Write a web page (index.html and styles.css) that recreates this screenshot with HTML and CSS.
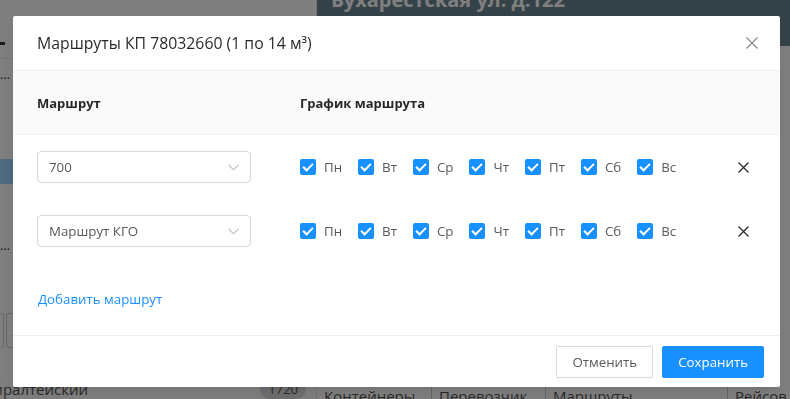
FILE: index.html
```html
<!DOCTYPE html>
<html lang="ru">
<head>
    <meta charset="UTF-8">
    <meta name="viewport" content="width=device-width, initial-scale=1.0">
    <title>Маршруты КП</title>
    <link rel="stylesheet" href="styles.css">
</head>
<body>
    <div class="page">
        <div class="sidebar">
            <div class="filter"><span class="dash"></span></div>
            <div class="list-item"><span class="dots">…</span></div>
            <div class="list-item tall"></div>
            <div class="list-item active"></div>
            <div class="list-item"><span class="dots">…</span></div>
            <div class="tools">
                <span class="tool-btn"></span>
                <span class="tool-btn"></span>
            </div>
            <div class="district">
                <span class="district-name">Адмиралтейский</span>
                <span class="badge">1720</span>
            </div>
        </div>
        <div class="main">
            <div class="topbar"><span class="address">Бухарестская ул. д.122</span></div>
            <div class="main-body"></div>
            <div class="grid-head">
                <span class="gh-cell">Контейнеры</span>
                <span class="gh-cell">Перевозчик</span>
                <span class="gh-cell">Маршруты</span>
                <span class="gh-cell last">Рейсов в неделю</span>
            </div>
        </div>
    </div>

    <div class="mask"></div>

    <div class="modal-wrap">
        <div class="modal">
            <div class="modal-header">
                <div class="modal-title">Маршруты КП 78032660 (1 по 14 м³)</div>
                <button class="modal-close" aria-label="Закрыть">
                    <svg width="12" height="12" viewBox="0 0 12 12"><path d="M0.5 0.5 L11.5 11.5 M11.5 0.5 L0.5 11.5" stroke="currentColor" stroke-width="1.2" fill="none"/></svg>
                </button>
            </div>

            <div class="routes">
                <div class="routes-row routes-head">
                    <div class="col-route">Маршрут</div>
                    <div class="col-days">График маршрута</div>
                    <div class="col-del"></div>
                </div>

                <div class="routes-row">
                    <div class="col-route">
                        <div class="select">
                            <span class="select-value">700</span>
                            <svg class="select-arrow" width="11" height="7" viewBox="0 0 11 7"><path d="M0.5 0.8 L5.5 5.8 L10.5 0.8" stroke="currentColor" stroke-width="1.1" fill="none"/></svg>
                        </div>
                    </div>
                    <div class="col-days days">
                        <label class="day"><span class="box"></span><span class="day-label">Пн</span></label>
                        <label class="day"><span class="box"></span><span class="day-label">Вт</span></label>
                        <label class="day"><span class="box"></span><span class="day-label">Ср</span></label>
                        <label class="day"><span class="box"></span><span class="day-label">Чт</span></label>
                        <label class="day"><span class="box"></span><span class="day-label">Пт</span></label>
                        <label class="day"><span class="box"></span><span class="day-label">Сб</span></label>
                        <label class="day"><span class="box"></span><span class="day-label">Вс</span></label>
                    </div>
                    <div class="col-del">
                        <svg width="11" height="11" viewBox="0 0 11 11"><path d="M0.5 0.5 L10.5 10.5 M10.5 0.5 L0.5 10.5" stroke="currentColor" stroke-width="1.2" fill="none"/></svg>
                    </div>
                </div>

                <div class="routes-row">
                    <div class="col-route">
                        <div class="select">
                            <span class="select-value">Маршрут КГО</span>
                            <svg class="select-arrow" width="11" height="7" viewBox="0 0 11 7"><path d="M0.5 0.8 L5.5 5.8 L10.5 0.8" stroke="currentColor" stroke-width="1.1" fill="none"/></svg>
                        </div>
                    </div>
                    <div class="col-days days">
                        <label class="day"><span class="box"></span><span class="day-label">Пн</span></label>
                        <label class="day"><span class="box"></span><span class="day-label">Вт</span></label>
                        <label class="day"><span class="box"></span><span class="day-label">Ср</span></label>
                        <label class="day"><span class="box"></span><span class="day-label">Чт</span></label>
                        <label class="day"><span class="box"></span><span class="day-label">Пт</span></label>
                        <label class="day"><span class="box"></span><span class="day-label">Сб</span></label>
                        <label class="day"><span class="box"></span><span class="day-label">Вс</span></label>
                    </div>
                    <div class="col-del">
                        <svg width="11" height="11" viewBox="0 0 11 11"><path d="M0.5 0.5 L10.5 10.5 M10.5 0.5 L0.5 10.5" stroke="currentColor" stroke-width="1.2" fill="none"/></svg>
                    </div>
                </div>
            </div>

            <div class="add-route">
                <a class="add-link" href="#">Добавить маршрут</a>
            </div>

            <div class="modal-footer">
                <button class="btn">Отменить</button>
                <button class="btn btn-primary">Сохранить</button>
            </div>
        </div>
    </div>
</body>
</html>
```

FILE: styles.css
```css
:root {
    --primary: #1890ff;
    --text: rgba(0, 0, 0, 0.85);
    --text-mid: #595959;
    --border: #d9d9d9;
    --split: #f0f0f0;
    --head-bg: #fafafa;
}

* {
    box-sizing: border-box;
    margin: 0;
    padding: 0;
}

body {
    font-family: 'Open Sans', 'Noto Sans', sans-serif;
    font-size: 13.3px;
    color: var(--text);
    background: #fff;
    width: 790px;
    height: 399px;
    overflow: hidden;
}

/* page behind the dialog */
.page {
    display: flex;
    height: 399px;
    overflow: hidden;
}

.sidebar {
    width: 316px;
    flex-shrink: 0;
    display: flex;
    flex-direction: column;
}

.filter {
    height: 60px;
    border-bottom: 1px solid #e8e8e8;
    padding-top: 42px;
}

.dash {
    display: block;
    width: 5px;
    height: 3px;
    background: #333;
}

.list-item {
    height: 34px;
    padding-top: 6px;
}

.list-item.tall {
    height: 70px;
}

.list-item.active {
    height: 26px;
    background: #9ed6ff;
    margin-bottom: 46px;
}

.dots {
    font-size: 13px;
    color: #333;
    line-height: 14px;
}

.tools {
    display: flex;
    gap: 2px;
    margin-top: 50px;
    height: 35px;
}

.tool-btn {
    width: 10px;
    height: 35px;
    border: 1px solid #ccc;
    border-radius: 3px;
    background: #fff;
}

.tool-btn:first-child {
    width: 4px;
    border-left: none;
}

.district {
    display: flex;
    align-items: flex-start;
    margin-top: 31px;
    padding-right: 10px;
}

.district-name {
    width: 88px;
    display: flex;
    justify-content: flex-end;
    overflow: hidden;
    white-space: nowrap;
    font-size: 15px;
    color: #555;
    line-height: 20px;
}

.badge {
    margin-left: auto;
    background: #ddd;
    border-radius: 10px;
    padding: 0 8px;
    font-size: 13px;
    color: #555;
    line-height: 20px;
}

.main {
    flex: 1;
    min-width: 0;
    display: flex;
    flex-direction: column;
    border-left: 1px solid #e8e8e8;
    overflow: hidden;
}

.topbar {
    height: 46px;
    flex-shrink: 0;
    background: #6a8692;
    overflow: hidden;
    padding-left: 14px;
}

.address {
    display: block;
    margin-top: -12px;
    color: #fff;
    font-weight: 700;
    font-size: 20px;
    line-height: 24px;
    white-space: nowrap;
}

.main-body {
    flex: 1;
}

.grid-head {
    display: flex;
    height: 13px;
    font-size: 15px;
    line-height: 20px;
    color: #555;
    white-space: nowrap;
    overflow: hidden;
}

.gh-cell {
    flex-shrink: 0;
    padding-left: 7px;
    border-right: 1px solid #ccc;
}

.gh-cell:nth-child(1) { width: 115px; }
.gh-cell:nth-child(2) { width: 114px; }
.gh-cell:nth-child(3) { width: 182px; }

.gh-cell.last {
    flex-shrink: 1;
    min-width: 0;
    overflow: hidden;
    border-right: none;
}

.mask {
    position: fixed;
    inset: 0;
    background: rgba(0, 0, 0, 0.5);
}

/* dialog */
.modal-wrap {
    position: fixed;
    inset: 0;
    padding: 16px 0 0 13px;
}

.modal {
    width: 767px;
    background: #fff;
    border-radius: 2px;
    box-shadow: 0 3px 6px -4px rgba(0, 0, 0, 0.12), 0 6px 16px rgba(0, 0, 0, 0.08);
}

.modal-header {
    display: flex;
    align-items: center;
    height: 55px;
    padding: 0 24px;
    border-bottom: 1px solid var(--split);
}

.modal-title {
    flex: 1;
    font-size: 15.8px;
    line-height: 22px;
    color: var(--text);
}

.modal-close {
    border: none;
    background: none;
    color: #8c8c8c;
    width: 12px;
    height: 12px;
    margin-right: -2px;
    display: flex;
}

.routes-row {
    display: flex;
    align-items: center;
    height: 64px;
}

.routes-head {
    background: var(--head-bg);
    border-bottom: 1px solid var(--split);
    font-weight: 700;
    font-size: 13px;
    color: rgba(0, 0, 0, 0.85);
}

.col-route {
    width: 287px;
    padding-left: 24px;
}

.col-days {
    flex: 1;
}

.col-del {
    width: 60px;
    padding-right: 31px;
    display: flex;
    justify-content: flex-end;
    color: #262626;
}

.select {
    width: 214px;
    height: 32px;
    border: 1px solid var(--border);
    border-radius: 4px;
    display: flex;
    align-items: center;
    padding: 0 11px;
    color: var(--text-mid);
}

.select-value {
    flex: 1;
}

.select-arrow {
    color: #bfbfbf;
}

.days {
    display: flex;
    align-items: center;
}

.day {
    display: flex;
    align-items: center;
    margin-right: 8px;
}

.box {
    width: 16px;
    height: 16px;
    border-radius: 2px;
    background: var(--primary);
    position: relative;
}

.box::after {
    content: "";
    position: absolute;
    left: 5px;
    top: 2px;
    width: 4px;
    height: 8px;
    border: solid #fff;
    border-width: 0 2px 2px 0;
    transform: rotate(45deg);
}

.day-label {
    padding: 0 8px;
    color: var(--text-mid);
}

.add-route {
    height: 72px;
    display: flex;
    align-items: center;
    padding-left: 25px;
}

.add-link {
    color: var(--primary);
    text-decoration: none;
}

.modal-footer {
    display: flex;
    justify-content: flex-end;
    gap: 9px;
    border-top: 1px solid var(--split);
    padding: 10px 16px 9px;
}

.btn {
    height: 32px;
    padding: 0 15px;
    border: 1px solid var(--border);
    border-radius: 2px;
    background: #fff;
    font-family: inherit;
    font-size: 13.3px;
    color: var(--text-mid);
}

.btn-primary {
    background: var(--primary);
    border-color: var(--primary);
    color: #fff;
}
```
